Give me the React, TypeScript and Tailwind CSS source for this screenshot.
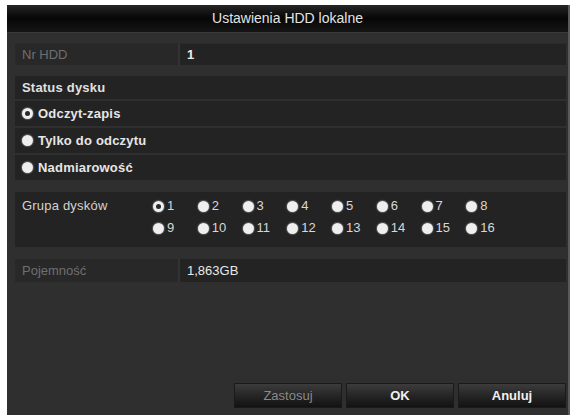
import React from "react";

const font = { fontFamily: '"Liberation Sans", Arial, sans-serif' };

function Radio({ checked }: { checked?: boolean }) {
  return (
    <span className="w-[11px] h-[11px] rounded-full bg-[#efefef] flex items-center justify-center shrink-0 shadow-[0_0_1px_1px_rgba(255,255,255,0.25)]">
      {checked && <span className="w-[5px] h-[5px] rounded-full bg-[#2a2a2a]" />}
    </span>
  );
}

function OptionRow({ label, checked }: { label: string; checked?: boolean }) {
  return (
    <div className="h-[25px] bg-[#232323] flex items-center pl-[7px] gap-[5px]">
      <Radio checked={checked} />
      <span className="text-[13px] font-bold text-[#e6e6e6] tracking-[0.2px]">{label}</span>
    </div>
  );
}

export default function App() {
  const groups = Array.from({ length: 16 }, (_, i) => i + 1);
  return (
    <div className="w-[576px] h-[415px] bg-white pt-[5px] pl-[7px] overflow-hidden" style={font}>
      <div className="w-[563px] h-[410px] bg-[#2f2f2f] flex flex-col border-r-[2px] border-[#5a5a5a]">
        <div className="h-[28px] shrink-0 bg-gradient-to-b from-[#262626] via-[#070707] to-[#161616] flex items-center justify-center border-b border-[#3a3a3a]">
          <span className="text-[14px] text-[#e4e4e4]">Ustawienia HDD lokalne</span>
        </div>
        <div className="flex-1 flex flex-col pl-[8px] pr-[2px] pt-[10px] pb-[2px]">
          <div className="h-[22px] flex bg-[#232323] border-t border-[#2b2b2b]">
            <div className="w-[165px] bg-[#282828] flex items-center pl-[7px] border-r-[2px] border-[#333]">
              <span className="text-[13px] text-[#6f6f6f]">Nr HDD</span>
            </div>
            <div className="flex-1 flex items-center pl-[7px]">
              <span className="text-[13px] font-bold text-[#ececec]">1</span>
            </div>
          </div>

          <div className="mt-[11px] flex flex-col gap-[2px]">
            <div className="h-[23px] bg-[#232323] flex items-center pl-[7px]">
              <span className="text-[13px] font-bold text-[#e0e0e0] tracking-[0.2px]">Status dysku</span>
            </div>
            <OptionRow label="Odczyt-zapis" checked />
            <OptionRow label="Tylko do odczytu" />
            <OptionRow label="Nadmiarowość" />
          </div>

          <div className="mt-[12px] h-[55px] bg-[#232323] flex pt-[3px]">
            <div className="w-[138px] pl-[7px] h-[22px] flex items-center">
              <span className="text-[13px] text-[#d2d2d2] tracking-[0.2px]">Grupa dysków</span>
            </div>
            <div className="grid grid-cols-8 w-[358px] auto-rows-[22px]">
              {groups.map((g) => (
                <div key={g} className="flex items-center gap-[3px]">
                  <Radio checked={g === 1} />
                  <span className="text-[13px] text-[#d8d8d8]">{g}</span>
                </div>
              ))}
            </div>
          </div>

          <div className="mt-[12px] h-[23px] flex bg-[#232323]">
            <div className="w-[165px] bg-[#282828] flex items-center pl-[7px] border-r-[2px] border-[#333]">
              <span className="text-[13px] text-[#6f6f6f]">Pojemność</span>
            </div>
            <div className="flex-1 flex items-center pl-[7px]">
              <span className="text-[13px] text-[#e8e8e8]">1,863GB</span>
            </div>
          </div>

          <div className="flex-1" />

          <div className="flex justify-end gap-[4px] pb-[5px]">
            <button className="w-[108px] h-[25px] bg-gradient-to-b from-[#3c3c3c] to-[#121212] text-[13px] text-[#8a8a8a] border border-[#1a1a1a]">
              Zastosuj
            </button>
            <button className="w-[108px] h-[25px] bg-gradient-to-b from-[#3c3c3c] to-[#121212] text-[13px] font-bold text-[#f0f0f0] border border-[#1a1a1a]">
              OK
            </button>
            <button className="w-[108px] h-[25px] bg-gradient-to-b from-[#3c3c3c] to-[#121212] text-[13px] font-bold text-[#f0f0f0] border border-[#1a1a1a]">
              Anuluj
            </button>
          </div>
        </div>
      </div>
    </div>
  );
}
